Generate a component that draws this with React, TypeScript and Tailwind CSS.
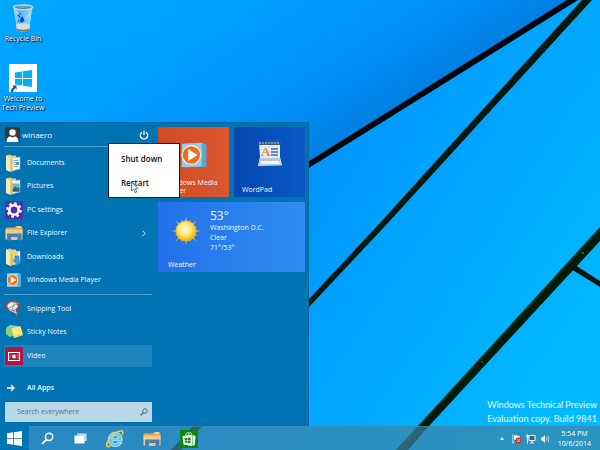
import type { ReactNode } from "react";

function WindowsLogo({ className }: { className?: string }) {
  return (
    <svg viewBox="0 0 16 16" className={className} fill="currentColor" aria-hidden="true">
      <path d="M0 2.3 6.6 1.3V7.6H0zM7.4 1.2 16 0V7.6H7.4zM0 8.4H6.6V14.7L0 13.7zM7.4 8.4H16V16L7.4 14.8z" />
    </svg>
  );
}

function Wallpaper() {
  return (
    <svg
      className="absolute inset-0 h-full w-full"
      viewBox="0 0 600 450"
      preserveAspectRatio="none"
      aria-hidden="true"
    >
      <defs>
        <linearGradient id="upper" gradientUnits="userSpaceOnUse" x1="220" y1="-110" x2="375" y2="138">
          <stop offset="0" stopColor="#00a6ff" />
          <stop offset="0.4" stopColor="#00a0ff" />
          <stop offset="0.76" stopColor="#008df8" />
          <stop offset="1" stopColor="#007cdb" />
        </linearGradient>
        <linearGradient id="lower" gradientUnits="userSpaceOnUse" x1="330" y1="160" x2="590" y2="330">
          <stop offset="0" stopColor="#0098ff" />
          <stop offset="0.45" stopColor="#00a8ff" />
          <stop offset="1" stopColor="#00b8ff" />
        </linearGradient>
      </defs>
      <rect width="600" height="450" fill="url(#lower)" />
      <path d="M0 0H573L0 357Z" fill="url(#upper)" />
      <path d="M0 354 567 0H578L0 361Z" fill="#04060c" />
      <path d="M582 0H592L386 225 309 307 181 450H171L309 299 378 225Z" fill="#06190f" />
      <path d="M600 227V241L429 426 408 450H396L418 426Z" fill="#061a08" />
      <path d="M600 228V230L420 426 400 450H396L418 426Z" fill="#0a3310" />
      <path d="M575 265 600 281V287L571 269Z" fill="#04120e" />
      <circle cx="583" cy="253" r="1" fill="#3d7a3d" />
      <circle cx="482" cy="362" r="1" fill="#2d6030" />
    </svg>
  );
}

function RecycleBin() {
  return (
    <svg viewBox="0 0 22 28" className="h-7 w-[22px]" aria-hidden="true">
      <defs>
        <linearGradient id="bin" x1="0" x2="1" y1="0" y2="0">
          <stop offset="0" stopColor="#c8e6f7" stopOpacity="0.9" />
          <stop offset="0.35" stopColor="#5db8ee" stopOpacity="0.8" />
          <stop offset="1" stopColor="#bfe3f8" stopOpacity="0.9" />
        </linearGradient>
      </defs>
      <path d="M1.5 3 5 26.5H17L20.5 3Z" fill="url(#bin)" />
      <path d="M4 20.5 5 26.5Q11 28.5 17 26.5L18 20.5Q11 18 4 20.5Z" fill="#d9dde0" />
      <path d="M4.8 24.5 5 26.5Q11 28.5 17 26.5L17.3 24.5Q11 27 4.8 24.5Z" fill="#85796f" />
      <path d="M5.5 11 8 9l1 2.5-1.5 2zM8.5 14l2-1.5 2 3.5-2 2.5-2.5-1zM6.500 15l1.2 3.2-1.4-.6z" fill="#1747c4" />
      <path d="M13 15 19 9M4 8 9 12" stroke="#e2f3fc" strokeWidth="0.8" />
      <ellipse cx="11" cy="3.2" rx="9.7" ry="2.4" fill="#6aa9cf" stroke="#c9d5da" strokeWidth="1.2" />
      <path d="M4 3.5Q11 5.5 18 3.5" stroke="#6f7d84" fill="none" />
    </svg>
  );
}

function DocumentFolder({ kind }: { kind: "documents" | "pictures" | "downloads" }) {
  return (
    <svg viewBox="0 0 16 18" className="h-[18px] w-4" aria-hidden="true">
      <path d="M0 1.5 4.500 .5 5.5 1.500H10V16L5 17.500 0 15.500z" fill="#e8cf7e" />
      <path d="M5 4 14 3V15L6 16.500z" fill="#eef3f4" stroke="#b5c3c8" strokeWidth="0.5" />
      {kind === "documents" && (
        <>
          <path d="M7.500 6.500h5M7.500 8.500h5M7.500 10.500h5M8 12.500h4" stroke="#6d9fc4" strokeWidth="0.9" />
          <rect x="10" y="8" width="3" height="3" fill="#5b8fae" />
        </>
      )}
      {kind === "pictures" && (
        <>
          <path d="M6.5 6.500H13.500V14H6.500z" fill="#64b3e4" />
          <path d="M6.500 12 9 9.500l2 1.500 2.500-1V14.500H6.500z" fill="#3f7442" />
          <path d="M6.500 13H13.500V14.500H6.500z" fill="#27598e" />
        </>
      )}
      {kind === "downloads" && <path d="M5 3.500 12 3V16L6 17z" fill="#e9d27f" />}
      <path d="M0 1.500 4.500 4.500V18L0 16z" fill="#f9ebb4" />
      <path d="M4.500 4.500 6.500 5.500V17.500L4.500 18z" fill="#d9bc66" />
      {kind === "downloads" && (
        <path d="M9 8h4v4h2.500L11.500 17.500 7 12H9z" fill="#2f9ce8" stroke="#1a74c2" strokeWidth="0.4" />
      )}
    </svg>
  );
}

function GearTile() {
  return (
    <svg viewBox="0 0 18 18" className="h-[18px] w-[18px]" aria-hidden="true">
      <rect width="18" height="18" fill="#4e2db3" />
      <circle cx="9" cy="9" r="6.7" fill="none" stroke="#fff" strokeWidth="2.2" strokeDasharray="2.63 2.63" />
      <circle cx="9" cy="9" r="4.7" fill="none" stroke="#fff" strokeWidth="2.6" />
    </svg>
  );
}

function ExplorerIcon() {
  return (
    <svg viewBox="0 0 18 16" className="h-4 w-[18px]" aria-hidden="true">
      <path d="M.5 3.5 1.5 2.5H10l1-1.5h5.5l1 1.5V9H.5z" fill="#dba75c" />
      <path d="M.5 4.500H17.500V14.500H.5z" fill="#f3cd85" />
      <path d="M12 2h4" stroke="#fff1cf" />
      <path d="M2 8.500H16.500V15.500H12.500V12H6V15.500H2z" fill="#467fbe" />
      <path d="M6.500 12H12V15H6.500z" fill="#eec278" />
    </svg>
  );
}

function MediaPlayerIcon({ className = "h-4 w-4" }: { className?: string }) {
  return (
    <svg viewBox="0 0 16 16" className={className} aria-hidden="true">
      <path d="M3 1 15 2V15L3 15z" fill="#4595be" />
      <path d="M1 1.500 12.500 1V14.500L1 15z" fill="#95cde8" />
      <path d="M12.500 1 15 2V15L12.500 14.500z" fill="#5aa9d1" />
      <circle cx="6.500" cy="8" r="5.300" fill="#ee701c" stroke="#fff1df" strokeWidth="0.700" />
      <path d="M4.700 4.600 10 8 4.700 11.400z" fill="#fff" />
    </svg>
  );
}

function SnippingIcon() {
  return (
    <svg viewBox="0 0 18 18" className="h-[18px] w-[18px]" aria-hidden="true">
      <ellipse cx="7.500" cy="6" rx="6" ry="4.500" fill="#f6f1ef" stroke="#c93c42" strokeWidth="1.700" />
      <path d="M4 8 14 3M7 9l3-7" stroke="#8c9caa" strokeWidth="1" />
      <path d="M4 9.500 13 14M9 7l2.500 8" stroke="#c9d6de" strokeWidth="1.300" />
      <circle cx="14.500" cy="12.500" r="1.800" fill="none" stroke="#44617a" strokeWidth="1.100" />
      <circle cx="11.500" cy="15.500" r="1.600" fill="none" stroke="#44617a" strokeWidth="1.100" />
    </svg>
  );
}

function StickyIcon() {
  return (
    <svg viewBox="0 0 18 18" className="h-[18px] w-[18px]" aria-hidden="true">
      <path d="M1 5 5 2l8 1-1 9-9 1z" fill="#7fcff0" />
      <path d="M1 6 8 3l5 8-8 3-4-3z" fill="#8fd06c" />
      <path d="M6.500 5.500 15.500 3 18 12 9 15z" fill="#fbe97c" />
      <path d="M9 15 18 12l-.5-1.500L8.500 13z" fill="#efd152" />
    </svg>
  );
}

function VideoIcon() {
  return (
    <svg viewBox="0 0 18 18" className="h-[18px] w-[18px]" aria-hidden="true">
      <rect width="18" height="18" fill="#b5163e" />
      <rect x="3.500" y="5.500" width="11" height="8" fill="none" stroke="#fff" />
      <circle cx="9" cy="9.500" r="1.900" fill="#fff" />
      <path d="M5 7.500v4M13 7.500v4" stroke="#fff" strokeWidth="0.700" strokeDasharray="1 .5" />
    </svg>
  );
}

function Magnifier({ className }: { className?: string }) {
  return (
    <svg viewBox="0 0 14 14" className={className} fill="none" stroke="currentColor" aria-hidden="true">
      <circle cx="8.700" cy="5.200" r="3.900" strokeWidth="1.600" />
      <path d="M5.800 8.200 1.200 12.800" strokeWidth="2.200" />
    </svg>
  );
}

function WordPadIcon() {
  return (
    <svg viewBox="0 0 26 28" className="h-7 w-[26px]" aria-hidden="true">
      <path d="M2 3 23 3 23 17 25 25 1 26 3 17z" fill="#dfeaf2" />
      <path d="M1.500 1.500H24V5H1.500z" fill="#3c5d82" />
      <path d="M3 2v2M6 2v2M9 2v2M12 2v2M15 2v2M18 2v2M21 2v2" stroke="#a9c4de" />
      <path d="M3 18H22.500L24.500 25.500H1.200z" fill="#b7c9d6" />
      <path d="M4 21H22L23 24H3z" fill="#eff5f8" />
      <text x="4" y="16" fontSize="13" fontWeight="700" fontFamily="Liberation Serif, serif" fill="#ee8637">A</text>
      <path d="M14 9h7M14 12h7M14 15h7" stroke="#3d6db4" strokeWidth="1.300" />
    </svg>
  );
}

function SunIcon() {
  const rays = Array.from({ length: 16 }, (_, i) => i * 22.5);
  return (
    <svg viewBox="0 0 30 30" className="h-[30px] w-[30px]" aria-hidden="true">
      <defs>
        <radialGradient id="sun" cx="0.450" cy="0.420">
          <stop offset="0" stopColor="#fffde8" />
          <stop offset="0.600" stopColor="#ffea70" />
          <stop offset="1" stopColor="#f2c017" />
        </radialGradient>
      </defs>
      {rays.map((angle, i) => (
        <path
          key={angle}
          d={i % 2 ? "M14 6 15 3 16 6z" : "M14 6 15 0 16 6z"}
          fill="#c9b850"
          transform={`rotate(${angle} 15 15)`}
        />
      ))}
      <circle cx="15" cy="15" r="10.200" fill="url(#sun)" stroke="#e2ac13" strokeWidth="0.500" />
    </svg>
  );
}

function InternetExplorerIcon() {
  return (
    <svg viewBox="0 0 18 18" className="h-[18px] w-[18px]" aria-hidden="true">
      <path
        fillRule="evenodd"
        d="M9.200 2.200C13.500 2.200 16.500 5.500 16.300 10.800H6.300C6.500 14 10.800 14.500 11.800 12H16C14.500 18.500 2.200 18.300 2.200 10 2.200 5.500 5 2.200 9.200 2.200zM6.300 8.200H12.200C12 4.900 6.600 4.900 6.300 8.200z"
        fill="#5fd0f8"
        stroke="#d6f4ff"
        strokeWidth="0.700"
      />
      <path
        d="M4.500 15.800C.5 18.300 -.2 15.500 1.700 11.800 4.200 6.500 10 1.800 14.200 .9c3-.6 3.200 1.600 1.800 4"
        fill="none"
        stroke="#f5cd38"
        strokeWidth="1.500"
      />
    </svg>
  );
}

function StoreIcon() {
  return (
    <svg viewBox="0 0 18 18" className="h-[18px] w-[18px]" aria-hidden="true">
      <rect width="18" height="18" fill="#078a0b" />
      <path d="M6 5.500C6 2.500 8 1.800 9 3M8.500 5C9 2 11.500 2 11.800 4.500" fill="none" stroke="#fff" strokeWidth="0.900" />
      <path d="M2.500 6 12 4.800V16L3.500 14.500zM12.500 5 15.500 6 14.700 15 12.500 16z" fill="#fff" />
      <path d="M4.500 8.200 7 7.900V10H4.700zM7.600 7.800 10.500 7.400V10H7.600zM4.800 10.600H7v2.200l-2.100-.3zM7.600 10.600h2.900v2.700l-2.900-.4z" fill="#078a0b" />
    </svg>
  );
}

function MenuItem({ icon, label, active, submenu }: { icon: ReactNode; label: string; active?: boolean; submenu?: boolean }) {
  return (
    <li className="flex items-center">
      <button className={`flex h-[22px] w-full items-center gap-1 pl-px text-left ${active ? "bg-[#1f84be]" : ""}`}>
        <span className="flex w-[18px] justify-center">{icon}</span>
        <span className="flex-1">{label}</span>
        {submenu && (
          <svg viewBox="0 0 6 8" className="mr-[5px] h-[7px] w-[6px]" fill="none" stroke="currentColor" aria-hidden="true">
            <path d="M1.500 1 4.500 4 1.500 7" />
          </svg>
        )}
      </button>
    </li>
  );
}

function StartMenu() {
  return (
    <section
      aria-label="Start menu"
      className="absolute bottom-0 left-0 flex gap-[6px] border-t border-r border-[#0b639b] bg-[#0073b3] pr-[3px] pl-1 text-[7px] leading-[10px] text-[#f0f8fc]"
    >
      <div className="flex w-[148px] flex-col">
        <header className="flex h-[23px] items-center justify-between pr-[3px] pl-px">
          <button className="flex items-center gap-[2px] text-[8px]">
            <svg viewBox="0 0 15 15" className="h-[15px] w-[15px]" aria-hidden="true">
              <rect width="15" height="15" fill="#383838" />
              <circle cx="7.500" cy="5.500" r="3.200" fill="#fff" />
              <path d="M1.500 15Q1.500 9.500 5.500 9.500L7.500 10.500 9.500 9.500Q13.500 9.500 13.500 15z" fill="#fff" />
            </svg>
            winaero
          </button>
          <button aria-label="Power">
            <svg viewBox="0 0 10 10" className="h-[10px] w-[10px]" fill="none" stroke="#fff" strokeWidth="1.200" aria-hidden="true">
              <path d="M3 2.200A3.700 3.700 0 1 0 7 2.200M5 .5V5" />
            </svg>
          </button>
        </header>
        <hr className="border-[#4a9dcb]" />
        <ul className="mt-1 grid h-[141px] grid-rows-6">
          <MenuItem icon={<DocumentFolder kind="documents" />} label="Documents" />
          <MenuItem icon={<DocumentFolder kind="pictures" />} label="Pictures" />
          <MenuItem icon={<GearTile />} label="PC settings" />
          <MenuItem icon={<ExplorerIcon />} label="File Explorer" submenu />
          <MenuItem icon={<DocumentFolder kind="downloads" />} label="Downloads" />
          <MenuItem icon={<MediaPlayerIcon />} label="Windows Media Player" />
        </ul>
        <hr className="my-[2px] border-[#4a9dcb]" />
        <ul className="grid h-[71px] grid-rows-3">
          <MenuItem icon={<SnippingIcon />} label="Snipping Tool" />
          <MenuItem icon={<StickyIcon />} label="Sticky Notes" />
          <MenuItem icon={<VideoIcon />} label="Video" active />
        </ul>
        <button className="mt-2 flex h-6 items-center gap-3 pl-[3px] font-semibold">
          <svg viewBox="0 0 8 8" className="h-2 w-2" fill="none" stroke="#fff" strokeWidth="1.300" aria-hidden="true">
            <path d="M0 4H7M4 1 7 4 4 7" />
          </svg>
          All Apps
        </button>
        <label className="mt-[2px] mb-1 ml-px flex h-5 items-center bg-[#b8d7e9] pr-1 pl-3 text-[#4d646f]">
          <input
            type="search"
            aria-label="Search everywhere"
            placeholder="Search everywhere"
            className="min-w-0 flex-1 bg-transparent outline-none placeholder:text-[#5c7480]"
          />
          <Magnifier className="h-2 w-2" />
        </label>
      </div>

      <div className="grid w-[147px] grid-cols-2 content-start gap-[5px] pt-1 text-[#f2f8fd]">
        <button className="relative flex h-[70px] items-start justify-center bg-linear-to-r from-[#cf4a27] to-[#dc562e] pt-[14px]">
          <MediaPlayerIcon className="h-7 w-7" />
          <span className="absolute bottom-[2px] left-2 text-left leading-[8px]">Windows Media<br />Player</span>
        </button>
        <button className="relative flex h-[70px] items-start justify-center bg-linear-to-r from-[#0446b0] to-[#0a5ac6] pt-[13px]">
          <WordPadIcon />
          <span className="absolute bottom-[2px] left-2">WordPad</span>
        </button>
        <button className="relative col-span-2 flex h-[70px] items-start gap-[9px] bg-linear-to-r from-[#2470ea] to-[#308df0] pl-[13px] text-left">
          <span className="pt-[14px]"><SunIcon /></span>
          <span className="flex flex-col pt-[6px]">
            <span className="text-[12px] leading-[15px]">53°</span>
            <span>Washington D.C.</span>
            <span>Clear</span>
            <span>71°/53°</span>
          </span>
          <span className="absolute bottom-[2px] left-[10px]">Weather</span>
        </button>
      </div>

      <div
        role="menu"
        className="absolute top-5 left-[108px] flex h-[55px] w-[72px] flex-col justify-center gap-[14px] border border-[#1c1c1c] bg-white pl-3 text-[8px] font-semibold text-[#111]"
      >
        <button role="menuitem" className="text-left">Shut down</button>
        <button role="menuitem" className="text-left">Restart</button>
        <svg viewBox="0 0 8 13" className="absolute top-[37px] left-[22px] h-[13px] w-2" aria-hidden="true">
          <path d="M.7 1V10L2.800 8.200 4.200 11.700 5.700 11 4.300 7.700H7z" fill="#fff" stroke="#555" strokeWidth="0.800" />
        </svg>
      </div>
    </section>
  );
}

function Taskbar() {
  return (
    <footer className="relative flex h-6 items-center border-t border-[#4a87a8]/50 bg-[#3d83a8]/70 text-white">
      <button aria-label="Start" className="-mt-px flex h-6 w-[29px] items-center justify-center bg-[#0073b3]">
        <WindowsLogo className="h-[15px] w-[15px]" />
      </button>
      <nav className="flex flex-1 items-center pl-px">
        <button aria-label="Search" className="flex w-[34px] justify-center">
          <Magnifier className="h-[13px] w-[13px]" />
        </button>
        <button aria-label="Task view" className="flex w-8 justify-center">
          <svg viewBox="0 0 13 11" className="h-[11px] w-[13px]" aria-hidden="true">
            <path d="M3 .5H12.500V8H3z" fill="#c7dbe8" />
            <path d="M.5 2.500H10.500V10.500H.5z" fill="#fff" stroke="#a8bdc9" strokeWidth="0.500" />
          </svg>
        </button>
        <button aria-label="Internet Explorer" className="flex w-[38px] justify-center"><InternetExplorerIcon /></button>
        <button aria-label="File Explorer" className="flex w-9 justify-center"><ExplorerIcon /></button>
        <button aria-label="Store" className="flex w-[37px] justify-center"><StoreIcon /></button>
      </nav>
      <div className="flex items-center gap-1 pr-[9px]">
        <button aria-label="Show hidden icons">
          <svg viewBox="0 0 4 3" className="mr-1 h-[3px] w-1" aria-hidden="true"><path d="M0 3 2 0 4 3z" fill="#fff" /></svg>
        </button>
        <svg viewBox="0 0 10 10" className="h-[10px] w-[10px]" aria-hidden="true">
          <path d="M1 .5V9.500" stroke="#fff" />
          <path d="M1.500 1H5L8 2V6H1.500z" fill="#eef4f7" stroke="#52656f" strokeWidth="0.500" />
          <circle cx="6.500" cy="6.500" r="3" fill="#df2c2c" />
          <path d="M5.300 5.300 7.700 7.700M7.700 5.300 5.300 7.700" stroke="#fff" />
        </svg>
        <svg viewBox="0 0 10 10" className="h-[10px] w-[10px]" fill="none" aria-hidden="true">
          <path d="M3 1.500H9V6.500H3z" fill="#2e6480" stroke="#fff" />
          <path d="M1.500 0V4M.5 1V3H2.500V1M1.500 4V9.500M4 9H8M6 6.500V9" stroke="#fff" strokeWidth="0.900" />
        </svg>
        <svg viewBox="0 0 10 10" className="h-[10px] w-[10px]" fill="none" aria-hidden="true">
          <path d="M1 3.500H2.500L5 1V9L2.500 6.500H1z" fill="#fff" />
          <path d="M6.300 3.300Q7.400 5 6.300 6.700M8 1.800Q10 5 8 8.200" stroke="#e4eef4" strokeWidth="0.800" />
        </svg>
        <time className="ml-1 text-center text-[7px] leading-[10px]">5:54 PM<br />10/6/2014</time>
      </div>
    </footer>
  );
}

export default function App() {
  return (
    <div className="relative flex h-screen flex-col overflow-hidden font-['Open_Sans','Noto_Sans',sans-serif]">
      <Wallpaper />
      <main className="relative flex-1">
        <div className="flex w-[46px] flex-col items-center gap-[21px] pt-1 text-[7px] leading-[9px] text-white">
          <button className="flex flex-col items-center gap-[2px] whitespace-nowrap [text-shadow:1px_1px_1px_#00152c,0_0_2px_#00152c]">
            <RecycleBin />
            Recycle Bin
          </button>
          <button className="flex flex-col items-center gap-[2px] whitespace-nowrap [text-shadow:1px_1px_1px_#00152c,0_0_2px_#00152c]">
            <span className="relative flex h-7 w-7 items-center justify-center bg-white text-[#00b3f0]">
              <WindowsLogo className="h-[17px] w-[17px]" />
              <svg viewBox="0 0 7 7" className="absolute bottom-0 left-px h-[7px] w-[7px]" aria-hidden="true">
                <rect width="7" height="7" fill="#eef3fa" />
                <path d="M2.500.5H6.500V4.500L5.200 3.300Q3 4.500 3 7H1Q.5 4 3.700 1.900z" fill="#1c4a9c" />
              </svg>
            </span>
            <span>Welcome to<br />Tech Preview</span>
          </button>
        </div>
        <p className="absolute right-[3px] bottom-0 font-[Lato,sans-serif] text-[9px] leading-[14px] text-[#e9f8ff]">
          Windows Technical Preview<br />Evaluation copy. Build 9841
        </p>
        <StartMenu />
      </main>
      <Taskbar />
    </div>
  );
}
